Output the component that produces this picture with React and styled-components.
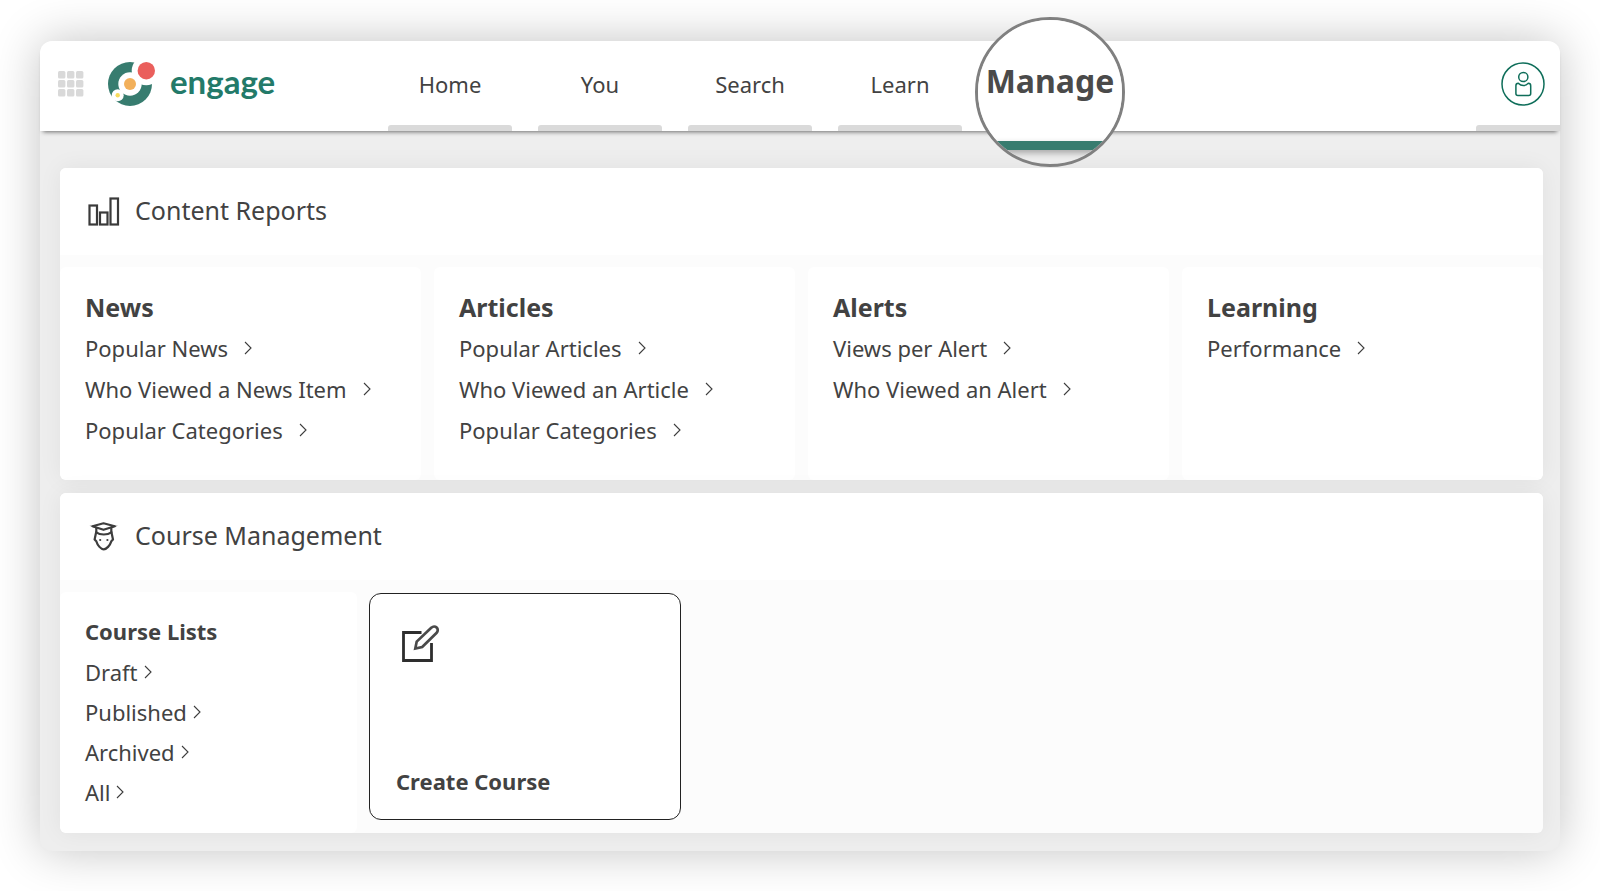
import React from "react";
import styled, { createGlobalStyle } from "styled-components";

const GlobalStyle = createGlobalStyle`
  *, *::before, *::after { box-sizing: border-box; }
  body {
    margin: 0;
    background: #fff;
    color: #424242;
    font-family: "Noto Sans", "Liberation Sans", sans-serif;
    font-size: 22px;
    line-height: 30px;
  }
  a { color: inherit; text-decoration: none; }
  h2, h3, ul, p { margin: 0; padding: 0; font: inherit; }
  ul { list-style: none; }
  button { font: inherit; color: inherit; cursor: pointer; }
  svg { display: block; flex: none; }
`;

const Page = styled.div`
  padding: 41px 40px 40px;
`;

const Window = styled.div`
  background: #eee;
  border-radius: 12px;
  box-shadow: 0 0 48px rgba(0, 0, 0, 0.24);
`;

const Header = styled.header`
  display: flex;
  height: 90px;
  padding-left: 18px;
  background: #fff;
  border-radius: 12px 12px 0 0;
  box-shadow: 0 4px 4px -3px rgba(0, 0, 0, 0.55);
`;

const Brand = styled.div`
  display: flex;
  align-items: center;
  gap: 24px;
  width: 330px;
  padding-bottom: 4px;
`;

const IconButton = styled.button`
  padding: 0;
  border: 0;
  background: none;
`;

const LogoLink = styled.a`
  display: flex;
  align-items: center;
  gap: 14px;
`;

const Wordmark = styled.span`
  color: #237a69;
  font: 700 33px/40px Lato, sans-serif;
  padding-bottom: 6px;
`;

const Nav = styled.nav`
  display: flex;
  gap: 26px;
`;

const NavItem = styled.a`
  position: relative;
  display: flex;
  flex-direction: column;
  width: 124px;
  text-align: center;
`;

const NavLabel = styled.span`
  flex: 1;
  display: flex;
  align-items: center;
  justify-content: center;
  padding-top: 2px;
`;

const Tab = styled.span`
  height: 6px;
  background: #dadada;
  border-radius: ${(p) => (p.$edge ? "3px 0 0 0" : "3px 3px 0 0")};
`;

const Lens = styled.span`
  position: absolute;
  top: -24px;
  left: 50%;
  transform: translateX(-50%);
  display: flex;
  flex-direction: column;
  width: 150px;
  height: 150px;
  overflow: hidden;
  border: 3px solid #808080;
  border-radius: 50%;
  background: #ededed;
`;

const LensLabel = styled.span`
  display: flex;
  align-items: center;
  justify-content: center;
  height: 121px;
  background: #fff;
  color: #4a4a4a;
  font-size: 32px;
  font-weight: 700;
`;

const LensBar = styled.span`
  height: 9px;
  background: #377c6f;
  box-shadow: 0 3px 6px rgba(0, 0, 0, 0.3);
`;

const Account = styled.div`
  display: flex;
  flex-direction: column;
  width: 84px;
  margin-left: auto;
`;

const AccountButton = styled(IconButton)`
  flex: 1;
  padding: 2px 0 0 25px;
`;

const Main = styled.main`
  display: flex;
  flex-direction: column;
  gap: 13px;
  padding: 37px 17px 18px 20px;
`;

const Panel = styled.section`
  overflow: hidden;
  background: #fcfcfc;
  border-radius: 6px;
`;

const PanelShadow = styled.div`
  border-radius: 6px;
  box-shadow: 0 0 24px rgba(0, 0, 0, 0.06);
`;

const PanelHeader = styled.div`
  display: flex;
  align-items: center;
  gap: 14px;
  height: 87px;
  padding-left: 27px;
  background: #fff;
`;

const PanelTitle = styled.h2`
  padding-bottom: 4px;
  font-size: 25px;
`;

const Reports = styled.div`
  display: grid;
  grid-template-columns: repeat(4, 1fr);
  gap: 13px;
  padding-top: 12px;
`;

const ReportGroup = styled.div`
  min-height: 213px;
  padding: 24px 25px;
  background: #fff;
  border-radius: 6px;
`;

const GroupTitle = styled.h3`
  margin-bottom: 4px;
  font-size: 25px;
  font-weight: 700;
  line-height: 32px;
`;

const LinkRow = styled.li`
  display: flex;
  align-items: center;
  height: ${(p) => (p.$tight ? 40 : 41)}px;
`;

const ItemLink = styled.a`
  display: flex;
  align-items: center;
  gap: ${(p) => (p.$tight ? 6 : 16)}px;
`;

const CourseBody = styled.div`
  display: flex;
  gap: 12px;
  padding-top: 12px;
`;

const CourseLists = styled.div`
  width: 297px;
  padding: 24px 25px 21px;
  background: #fff;
  border-radius: 6px;
`;

const CourseListsTitle = styled.h3`
  margin-bottom: 6px;
  font-weight: 700;
`;

const CreateCard = styled.button`
  display: flex;
  flex-direction: column;
  justify-content: space-between;
  align-items: flex-start;
  width: 312px;
  margin: 1px 0 13px;
  padding: 30px 26px 23px;
  border: 1px solid #222;
  border-radius: 12px;
  background: #fff;
  font-weight: 700;
`;

const GridIcon = () => (
  <svg width="26" height="26" viewBox="0 0 26 26" fill="#d9d9d9">
    {[0, 9, 18].map((y) =>
      [0, 9, 18].map((x) => <rect key={`${x}-${y}`} x={x} y={y} width="7.4" height="7.4" rx="1.5" />)
    )}
  </svg>
);

const LogoIcon = () => (
  <svg width="48" height="46" viewBox="0 0 48 46">
    <circle cx="22" cy="23" r="22" fill="#377c6f" />
    <circle cx="22" cy="23" r="11.7" fill="#fff" />
    <circle cx="38.3" cy="9.7" r="14.6" fill="#fff" />
    <circle cx="9.7" cy="34.3" r="6" fill="#fff" />
    <circle cx="22" cy="23" r="6" fill="#f2b05b" />
    <circle cx="38.3" cy="9.7" r="8.7" fill="#ea5f5c" />
    <circle cx="9.7" cy="34.3" r="2.2" fill="#f8db5c" />
  </svg>
);

const UserIcon = () => (
  <svg width="44" height="44" viewBox="0 0 44 44" fill="none" stroke="#0f6e5a" strokeWidth="1.5">
    <circle cx="22" cy="22" r="21" />
    <circle cx="22.3" cy="15" r="4.6" />
    <path d="M17.3 21.3C18.4 22.4 20 23.6 22.3 23.6C24.6 23.6 26.2 22.4 27.3 21.3C28.9 21.3 29.7 22.3 29.7 23.8V31.4Q29.7 33.4 27.7 33.4H16.9Q14.9 33.4 14.9 31.4V23.8C14.9 22.3 15.7 21.3 17.3 21.3Z" />
  </svg>
);

const ChartIcon = () => (
  <svg width="34" height="30" viewBox="0 0 34 30" fill="none" stroke="#3a3a3a" strokeWidth="2.2">
    <rect x="2.5" y="8.5" width="7.5" height="19" />
    <rect x="13" y="15.5" width="7.5" height="12" />
    <rect x="23.5" y="1.5" width="7.5" height="26" />
  </svg>
);

const GraduateIcon = () => (
  <svg width="34" height="30" viewBox="0 0 34 30" fill="none" stroke="#3d3d3d" strokeWidth="2.2" strokeLinejoin="round">
    <path d="M5.5 4.2L16.5 1.3L27.8 4.2L16.5 7.8Z" />
    <path d="M2.5 3.800H9V6.200ZM24 3.800H30.800L24 6.200Z" fill="#3d3d3d" stroke="none" />
    <path d="M9.300 5.500V10.400C13 13.200 20.500 13.200 24.300 10.400V5.500" />
    <path d="M9.300 9.500L7.600 17.500L9.300 19.300C10.500 23.500 14 27.300 16.700 27.300C19.500 27.300 23 23.500 24.300 19.300L26 17.500L24.300 9.500" />
    <g fill="#3d3d3d" stroke="none">
      <circle cx="13.2" cy="18" r="1.100" />
      <circle cx="20.400" cy="18" r="1.100" />
    </g>
  </svg>
);

const EditIcon = () => (
  <svg width="46" height="40" viewBox="0 0 46 40" fill="none" stroke="#2e2e2e" strokeWidth="2.8">
    <path d="M25.500 8.500H7.500V36.500H35.500V19" />
    <path d="M19.300 24.500L20.700 17.600L35.500 3.600A3.300 3.300 0 0 1 40.700 8.700L26.200 23Z" stroke="#4a4a4a" strokeWidth="2.700" />
  </svg>
);

const Chevron = () => (
  <svg width="8" height="14" viewBox="0 0 8 14" fill="none" stroke="#3d3d3d" strokeWidth="1.1">
    <path d="M1 1L7 7L1 13" />
  </svg>
);

const navItems = ["Home", "You", "Search", "Learn"];

const reportGroups = [
  { title: "News", links: ["Popular News", "Who Viewed a News Item", "Popular Categories"] },
  { title: "Articles", links: ["Popular Articles", "Who Viewed an Article", "Popular Categories"] },
  { title: "Alerts", links: ["Views per Alert", "Who Viewed an Alert"] },
  { title: "Learning", links: ["Performance"] },
];

const courseLinks = ["Draft", "Published", "Archived", "All"];

const LinkList = ({ links, tight }) => (
  <ul>
    {links.map((label) => (
      <LinkRow key={label} $tight={tight}>
        <ItemLink href="#" $tight={tight}>
          {label}
          <Chevron />
        </ItemLink>
      </LinkRow>
    ))}
  </ul>
);

export default function App() {
  return (
    <Page>
      <GlobalStyle />
      <Window>
        <Header>
          <Brand>
            <IconButton aria-label="Apps">
              <GridIcon />
            </IconButton>
            <LogoLink href="#">
              <LogoIcon />
              <Wordmark>engage</Wordmark>
            </LogoLink>
          </Brand>
          <Nav>
            {navItems.map((label) => (
              <NavItem key={label} href="#">
                <NavLabel>{label}</NavLabel>
                <Tab />
              </NavItem>
            ))}
            <NavItem href="#" aria-current="page">
              <Lens>
                <LensLabel>Manage</LensLabel>
                <LensBar />
              </Lens>
            </NavItem>
          </Nav>
          <Account>
            <AccountButton aria-label="Account">
              <UserIcon />
            </AccountButton>
            <Tab $edge />
          </Account>
        </Header>
        <Main>
          <PanelShadow>
            <Panel>
              <PanelHeader>
                <ChartIcon />
                <PanelTitle>Content Reports</PanelTitle>
              </PanelHeader>
              <Reports>
                {reportGroups.map((group) => (
                  <ReportGroup key={group.title}>
                    <GroupTitle>{group.title}</GroupTitle>
                    <LinkList links={group.links} />
                  </ReportGroup>
                ))}
              </Reports>
            </Panel>
          </PanelShadow>
          <PanelShadow>
            <Panel>
              <PanelHeader>
                <GraduateIcon />
                <PanelTitle>Course Management</PanelTitle>
              </PanelHeader>
              <CourseBody>
                <CourseLists>
                  <CourseListsTitle>Course Lists</CourseListsTitle>
                  <LinkList links={courseLinks} tight />
                </CourseLists>
                <CreateCard>
                  <EditIcon />
                  Create Course
                </CreateCard>
              </CourseBody>
            </Panel>
          </PanelShadow>
        </Main>
      </Window>
    </Page>
  );
}
